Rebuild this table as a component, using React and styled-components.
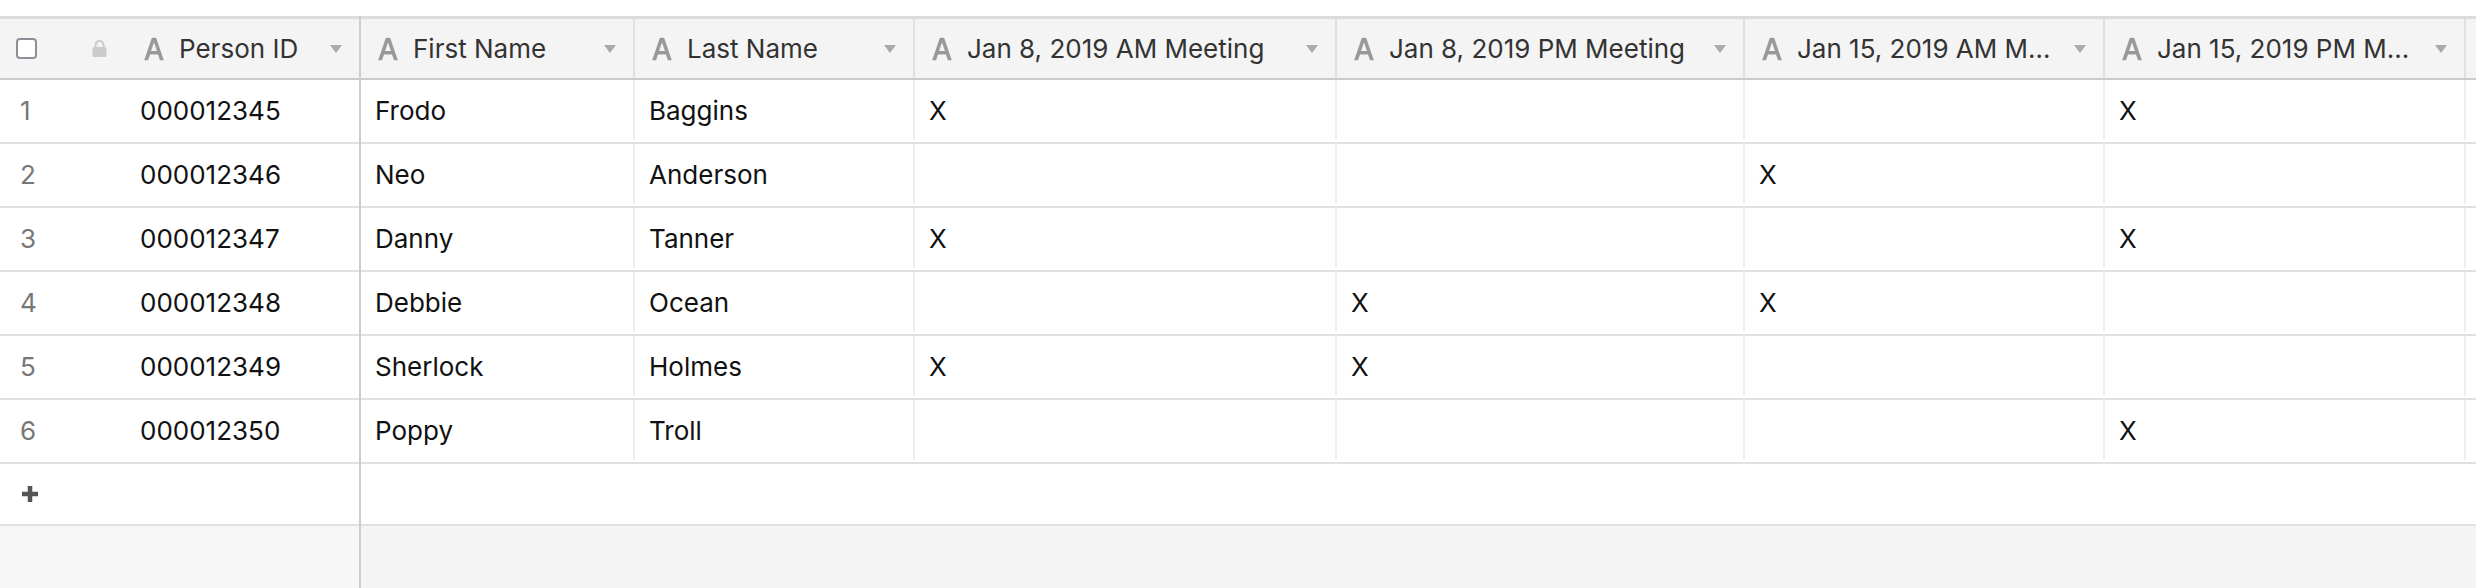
import React from "react";
import styled, { createGlobalStyle } from "styled-components";

const GlobalStyle = createGlobalStyle`
  html, body, #root { height: 100%; }
  body {
    margin: 0;
    background: #ffffff;
    font-family: Inter, "Noto Sans", "Liberation Sans", sans-serif;
    overflow: hidden;
  }
  * { box-sizing: border-box; }
`;

const Page = styled.div`
  height: 100%;
  padding-top: 16px;
  display: flex;
  flex-direction: column;
`;

const Grid = styled.div`
  flex: 1;
  display: flex;
  min-height: 0;
`;

const Pane = styled.div`
  display: flex;
  flex-direction: column;
  ${(p) => (p.$frozen ? "width: 361px; flex: none; border-right: 2px solid #cdcdcd;" : "flex: 1; min-width: 0; overflow: hidden;")}
`;

const HeaderRow = styled.div`
  display: flex;
  height: 64px;
  flex: none;
  background: #f4f4f4;
  border-top: 3px solid #dcdcdc;
  border-bottom: 2px solid #cbcbcb;
`;

const Row = styled.div`
  display: flex;
  height: 64px;
  flex: none;
  padding-bottom: 2px;
  border-bottom: 2px solid #dfe2e5;
  background: #ffffff;
`;

const AddRow = styled.div`
  display: flex;
  align-items: center;
  height: 62px;
  flex: none;
  padding-left: 22px;
  border-bottom: 2px solid #dfe2e5;
  background: #ffffff;
`;

const Filler = styled.div`
  flex: 1;
  background: ${(p) => (p.$frozen ? "#f7f7f7" : "#f4f4f4")};
`;

const HeaderCell = styled.div`
  flex: none;
  width: ${(p) => p.$w}px;
  display: flex;
  align-items: center;
  padding: 0 17px 0 16px;
  border-right: ${(p) => (p.$last ? "none" : "2px solid #dde1e6")};
  color: #333333;
  font-size: 26px;
  min-width: 0;
`;

const Cell = styled.div`
  flex: none;
  width: ${(p) => p.$w}px;
  display: flex;
  align-items: center;
  padding: 0 14px;
  border-right: ${(p) => (p.$last ? "none" : "2px solid #eceef0")};
  color: #111111;
  font-size: 26px;
  white-space: nowrap;
  overflow: hidden;
`;

const FrozenHeader = styled.div`
  display: flex;
  align-items: center;
  width: 100%;
  padding: 0 17px 0 16px;
  color: #333333;
  font-size: 26px;
`;

const FrozenRowInner = styled.div`
  display: flex;
  align-items: center;
  width: 100%;
  font-size: 26px;
`;

const RowNumber = styled.div`
  width: 140px;
  flex: none;
  padding-left: 20px;
  color: #777777;
`;

const PrimaryValue = styled.div`
  color: #111111;
`;

const Checkbox = styled.div`
  width: 21px;
  height: 21px;
  flex: none;
  border: 2px solid #8b9096;
  border-radius: 4px;
  background: #ffffff;
`;

const LockSlot = styled.div`
  width: 106px;
  flex: none;
  display: flex;
  padding-left: 55px;
`;

const Title = styled.span`
  flex: 1;
  min-width: 0;
  margin-left: 14px;
  white-space: nowrap;
  overflow: hidden;
  text-overflow: ellipsis;
  padding-right: 14px;
`;

const TextIcon = () => (
  <svg width="22" height="24" viewBox="0 0 22 24" style={{ flex: "none" }}>
    <path
      d="M1.2 23.2 L8.6 1.6 Q9 0.8 9.8 0.8 H12.2 Q13 0.8 13.4 1.6 L20.8 23.2 H17 L15 17.4 H7 L5 23.2 Z M8.1 14 H13.9 L11 5.2 Z"
      fill="#999999"
    />
  </svg>
);

const LockIcon = () => (
  <svg width="15" height="17" viewBox="0 0 15 17">
    <path d="M3.5 7 V5 a4 4 0 0 1 8 0 V7" fill="none" stroke="#cccccc" strokeWidth="2.2" />
    <rect x="0.5" y="7" width="14" height="10" rx="1.5" fill="#cccccc" />
  </svg>
);

const Caret = () => (
  <svg width="12" height="8" viewBox="0 0 12 8" style={{ flex: "none" }}>
    <path d="M0 0 H12 L6 8 Z" fill="#aaaaaa" />
  </svg>
);

const PlusIcon = () => (
  <svg width="16" height="16" viewBox="0 0 16 16">
    <path d="M8 0 V16 M0 8 H16" stroke="#555555" strokeWidth="4.5" />
  </svg>
);

const columns = [
  { key: "first", title: "First Name", width: 274 },
  { key: "last", title: "Last Name", width: 280 },
  { key: "am8", title: "Jan 8, 2019 AM Meeting", width: 422 },
  { key: "pm8", title: "Jan 8, 2019 PM Meeting", width: 408 },
  { key: "am15", title: "Jan 15, 2019 AM Meeting", width: 360 },
  { key: "pm15", title: "Jan 15, 2019 PM Meeting", width: 361 },
];

const rows = [
  { id: "000012345", first: "Frodo", last: "Baggins", am8: "X", pm8: "", am15: "", pm15: "X" },
  { id: "000012346", first: "Neo", last: "Anderson", am8: "", pm8: "", am15: "X", pm15: "" },
  { id: "000012347", first: "Danny", last: "Tanner", am8: "X", pm8: "", am15: "", pm15: "X" },
  { id: "000012348", first: "Debbie", last: "Ocean", am8: "", pm8: "X", am15: "X", pm15: "" },
  { id: "000012349", first: "Sherlock", last: "Holmes", am8: "X", pm8: "X", am15: "", pm15: "" },
  { id: "000012350", first: "Poppy", last: "Troll", am8: "", pm8: "", am15: "", pm15: "X" },
];

export default function App() {
  return (
    <>
      <GlobalStyle />
      <Page>
        <Grid>
          <Pane $frozen>
            <HeaderRow>
              <FrozenHeader>
                <Checkbox />
                <LockSlot>
                  <LockIcon />
                </LockSlot>
                <TextIcon />
                <Title>Person ID</Title>
                <Caret />
              </FrozenHeader>
            </HeaderRow>
            {rows.map((r, i) => (
              <Row key={r.id}>
                <FrozenRowInner>
                  <RowNumber>{i + 1}</RowNumber>
                  <PrimaryValue>{r.id}</PrimaryValue>
                </FrozenRowInner>
              </Row>
            ))}
            <AddRow>
              <PlusIcon />
            </AddRow>
            <Filler $frozen />
          </Pane>
          <Pane>
            <HeaderRow>
              {columns.map((c) => (
                <HeaderCell key={c.key} $w={c.width}>
                  <TextIcon />
                  <Title>{c.title}</Title>
                  <Caret />
                </HeaderCell>
              ))}
              <HeaderCell $w={300} $last />
            </HeaderRow>
            {rows.map((r) => (
              <Row key={r.id}>
                {columns.map((c) => (
                  <Cell key={c.key} $w={c.width}>
                    {r[c.key]}
                  </Cell>
                ))}
                <Cell $w={300} $last />
              </Row>
            ))}
            <AddRow />
            <Filler />
          </Pane>
        </Grid>
      </Page>
    </>
  );
}
